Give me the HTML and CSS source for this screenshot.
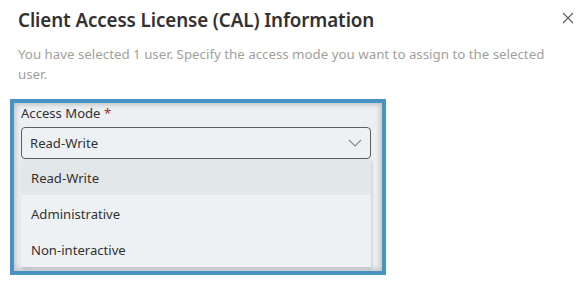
FILE: index.html
```html
<!DOCTYPE html>
<html>
<head>
<meta charset="utf-8">
<link rel="stylesheet" href="styles.css">
</head>
<body>
<div class="dialog">
  <div class="header">
    <h1 class="title">Client Access License (CAL) Information</h1>
    <button class="close" aria-label="Close">
      <svg width="12" height="12" viewBox="0 0 12 12"><path d="M1 1L11 11M11 1L1 11" stroke="#605e5c" stroke-width="1.1" fill="none"/></svg>
    </button>
  </div>
  <p class="desc">You have selected 1 user. Specify the access mode you want to assign to the selected user.</p>
  <div class="highlight">
    <div class="field">
      <label class="label">Access Mode <span class="req">*</span></label>
      <div class="select">
        <span>Read-Write</span>
        <svg width="14" height="8" viewBox="0 0 14 8"><path d="M1 1L7 7L13 1" stroke="#8a8886" stroke-width="1.1" fill="none"/></svg>
      </div>
      <ul class="list">
        <li class="item selected">Read-Write</li>
        <li class="item">Administrative</li>
        <li class="item">Non-interactive</li>
      </ul>
    </div>
  </div>
</div>
</body>
</html>
```
FILE: styles.css
```css
* { box-sizing: border-box; }
body { margin: 0; background: #fff; font-family: "Noto Sans", "Open Sans", sans-serif; color: #323130; }
.dialog { width: 587px; height: 281px; position: relative; }
.header { display: flex; justify-content: space-between; align-items: flex-start; padding: 7px 0 0 18px; }
.title { margin: 0; font-size: 18.8px; font-weight: 600; line-height: 26px; color: #323130; letter-spacing: -0.1px; }
.close { border: none; background: none; padding: 0; margin: 5px 13px 0 0; width: 12px; height: 12px; display: flex; }
.desc { margin: 11px 18px 0 18px; font-size: 13.3px; line-height: 20px; color: #a19f9d; }
.highlight { margin: 15px 0 0 10px; width: 376px; height: 176px; border: 4px solid #4693c4; background: #ecf0f3; box-shadow: inset 0 0 5px 2px rgba(0,0,0,0.18); padding: 0 11px 0 7px; }
.label { display: block; font-size: 13.1px; line-height: 20px; color: #323130; }
.req { color: #a4262c; }
.select { margin-top: 4px; height: 32px; border: 1px solid #605e5c; border-radius: 4px; display: flex; align-items: center; justify-content: space-between; padding: 0 8px 0 8px; font-size: 13.1px; background: #edf1f4; }
.list { list-style: none; margin: 0; padding: 0; background: #edf1f4; box-shadow: 1px 2px 3px rgba(0,0,0,0.15); }
.item { height: 36px; line-height: 38px; padding-left: 10px; font-size: 13.1px; }
.item.selected { background: #e2e7ea; }
```
